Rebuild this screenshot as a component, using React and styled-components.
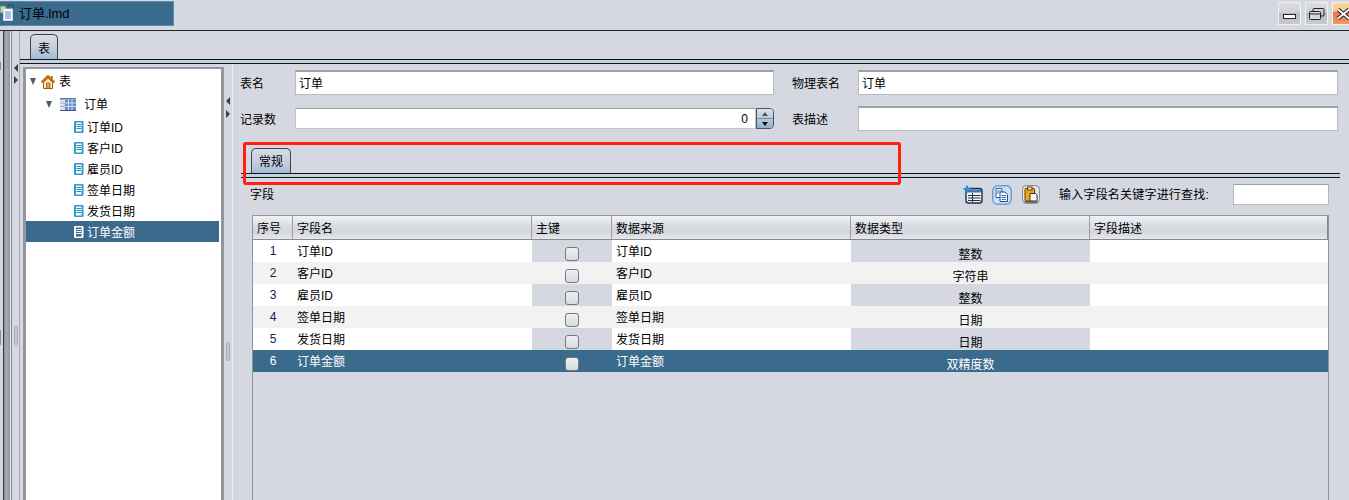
import React from "react";
import styled, { createGlobalStyle } from "styled-components";

const bg = "#d5d8e1";
const blue = "#3a6a8c";

const GlobalStyle = createGlobalStyle`
  html, body { margin: 0; padding: 0; background: ${bg}; }
  * { box-sizing: border-box; }
  body { font: 12px "Liberation Sans", "Noto Sans CJK SC", sans-serif; color: #000; }
`;

const Page = styled.div`
  position: relative;
  width: 1349px;
  height: 500px;
  overflow: hidden;
  background: ${bg};
  display: flex;
  flex-direction: column;
`;

const TitleBar = styled.div`
  height: 31px;
  flex: none;
  border-bottom: 1px solid #22262c;
  display: flex;
  justify-content: space-between;
  padding-top: 1px;
`;
const FileTab = styled.div`
  width: 174px;
  height: 25px;
  background: ${blue};
  border: 1px solid #5b8aae;
  border-left: none;
  display: flex;
  align-items: center;
  gap: 5px;
  font-size: 13px;
  padding-bottom: 2px;
`;
const WinButtons = styled.div`
  display: flex;
  gap: 4px;
  padding-top: 1px;
  margin-right: -6px;
`;
const WinButton = styled.div`
  width: 23px;
  height: 23px;
  border: 1px solid #f0f1f4;
  display: flex;
  align-items: center;
  justify-content: center;
  background: ${(p) =>
    p.$close
      ? "linear-gradient(#f8d9a0 0, #f6c689 40%, #f0704a 45%, #f29a5c 100%)"
      : "linear-gradient(#dcdde2 0, #cfd1d6 45%, #b9bbc0 50%, #c8cacf 100%)"};
`;

const Body = styled.div`
  flex: 1;
  display: flex;
  min-height: 0;
`;
const EdgeGutter = styled.div`
  width: 3px;
  flex: none;
  display: flex;
  flex-direction: column;
`;
const GutterMark = styled.div`
  width: 1px;
  height: ${(p) => p.$h}px;
  margin-top: ${(p) => p.$top}px;
  background: #8d9098;
`;
const EdgeStrip = styled.div`
  width: 9px;
  flex: none;
  border-left: 1px solid #33373d;
  border-right: 1px solid #888b92;
  background: linear-gradient(90deg, #8f929b 0, #a6a9b2 35%, #9396a0 84%, #e6e8ee 85%, #e6e8ee 100%);
`;
const Splitter = styled.div`
  width: 8px;
  flex: none;
  display: flex;
  flex-direction: column;
  align-items: center;
  padding-top: ${(p) => p.$top}px;
  border-right: 1px solid ${(p) => p.$line};
`;
const ArrowLeft = styled.div`
  width: 0;
  height: 0;
  border-style: solid;
  border-width: 4px 4px 4px 0;
  border-color: transparent #3c3f44 transparent transparent;
`;
const ArrowRight = styled.div`
  width: 0;
  height: 0;
  margin-top: ${(p) => p.$gap}px;
  border-style: solid;
  border-width: 4px 0 4px 4px;
  border-color: transparent transparent transparent #3c3f44;
`;
const Grip = styled.div`
  width: 4px;
  height: 19px;
  margin-top: ${(p) => p.$top}px;
  border: 1px solid #a9acb3;
  border-radius: 2px;
  background: #c6c9d0;
`;

const Workspace = styled.div`
  flex: 1;
  min-width: 0;
  display: flex;
  flex-direction: column;
`;
const TabStrip = styled.div`
  display: flex;
  height: ${(p) => p.$h}px;
  flex: none;
  padding-left: ${(p) => p.$left}px;
  align-items: flex-end;
`;
const Tab = styled.div`
  width: ${(p) => p.$w}px;
  height: 25px;
  border: 1px solid #3d4650;
  border-bottom: none;
  border-radius: 5px 5px 0 0;
  background: linear-gradient(#d8dbe3 0, #c6d0dd 50%, #a3bdd4 100%);
  display: flex;
  align-items: center;
  justify-content: center;
  padding-bottom: ${(p) => p.$lift || 0}px;
`;
const TabLine = styled.div`
  height: 5px;
  flex: none;
  border-top: 1px solid #10151c;
  border-bottom: 1px solid #10151c;
  background: #c4d2e0;
  margin-right: ${(p) => p.$right || 0}px;
`;

const Panes = styled.div`
  flex: 1;
  display: flex;
  min-height: 0;
`;
const TreePane = styled.div`
  width: 201px;
  flex: none;
  margin: 3px 0 0 3px;
  background: #fff;
  border: 3px solid #93969c;
  border-top-width: 2px;
  border-bottom: none;
  padding-top: 1px;
`;
const TreeRow = styled.div`
  display: flex;
  align-items: center;
  height: ${(p) => p.$h || 21}px;
  padding-left: ${(p) => p.$indent}px;
  margin-right: 2px;
  color: ${(p) => (p.$selected ? "#fff" : "#000")};
  background: ${(p) => (p.$selected ? blue : "transparent")};
`;
const TreeToggle = styled.div`
  width: 0;
  height: 0;
  margin-right: ${(p) => p.$gap}px;
  border-style: solid;
  border-width: 7px 3.5px 0 3.5px;
  border-color: #55585c transparent transparent transparent;
`;
const TreeLabel = styled.span`
  margin-left: ${(p) => p.$gap}px;
  padding-bottom: ${(p) => p.$lift || 0}px;
`;

const DetailPane = styled.div`
  flex: 1;
  min-width: 0;
  display: flex;
  flex-direction: column;
  border-left: 1px solid #f0f1f5;
  padding: 6px 0 0 7px;
`;
const FormGrid = styled.div`
  display: grid;
  grid-template-columns: 55px 479px 18px 66px 480px;
  grid-template-rows: 25px 25px;
  row-gap: 11px;
  align-items: center;
`;
const FormLabel = styled.div`
  grid-column: ${(p) => p.$col};
`;
const Field = styled.div`
  height: 25px;
  padding: 0 0 2px 3px;
  display: flex;
  align-items: center;
  background: #fff;
  border: 1px solid #b9bbbf;
  border-top: 2px solid #a0a2a6;
`;
const NumberField = styled.div`
  display: flex;
  height: 21px;
`;
const NumberValue = styled.div`
  flex: 1;
  background: #fff;
  border: 1px solid #c2c4c8;
  border-top: 1px solid #a0a2a6;
  text-align: right;
  padding: 3px 7px 0 0;
`;
const Spinner = styled.div`
  width: 18px;
  display: flex;
  flex-direction: column;
  border: 1px solid #43576b;
  border-radius: 0 4px 4px 0;
  overflow: hidden;
`;
const SpinPart = styled.div`
  flex: 1;
  display: flex;
  align-items: center;
  justify-content: center;
  background: ${(p) => (p.$down ? "linear-gradient(#b9cbdb, #93afc8)" : "linear-gradient(#e0e2e8, #bcc8d5)")};
  border-top: ${(p) => (p.$down ? "1px solid #7d8c9b" : "none")};
`;
const SpinUp = styled.div`
  width: 0;
  height: 0;
  border-style: solid;
  border-width: 0 3.5px 4px 3.5px;
  border-color: transparent transparent #555 transparent;
`;
const SpinDown = styled.div`
  width: 0;
  height: 0;
  border-style: solid;
  border-width: 4px 3.5px 0 3.5px;
  border-color: #111 transparent transparent transparent;
`;

const InnerTabs = styled.div`
  margin-left: 1px;
`;
const ToolRow = styled.div`
  height: 21px;
  margin-top: 6px;
  flex: none;
  display: flex;
  align-items: center;
  padding: 0 20px 0 10px;
`;
const ToolTitle = styled.div`
  flex: 1;
  padding-bottom: 3px;
`;
const ToolIcons = styled.div`
  display: flex;
  gap: 9px;
  margin-right: 18px;
`;
const ToolIcon = styled.div`
  width: 20px;
  height: 20px;
  display: flex;
  align-items: center;
  justify-content: center;
`;
const SearchLabel = styled.div`
  margin-right: 24px;
  padding-bottom: 3px;
  letter-spacing: 0.2px;
`;
const SearchField = styled.div`
  width: 96px;
  height: 21px;
  background: #fff;
  border: 1px solid #b4b6ba;
  border-top: 1px solid #a0a2a6;
`;

const Table = styled.div`
  flex: 1;
  margin: 10px 20px 0 12px;
  border: 1px solid #93969c;
  border-bottom: none;
  display: flex;
  flex-direction: column;
  min-height: 0;
`;
const columns = "40px 239px 80px 239px 239px 1fr";
const HeaderRow = styled.div`
  display: grid;
  grid-template-columns: ${columns};
  height: 24px;
  flex: none;
  border-bottom: 1px solid #85888e;
  background: linear-gradient(#f3f3f6 0, #dcdee4 40%, #d3d6dd 70%, #e7e8ec 100%);
`;
const HeaderCell = styled.div`
  display: flex;
  align-items: center;
  padding-left: 4px;
  border-right: 1px solid #9a9da3;
  &:last-child { border-right: 1px solid #85888e; }
`;
const Row = styled.div`
  display: grid;
  grid-template-columns: ${columns};
  grid-template-rows: 22px;
  height: 22px;
  flex: none;
  overflow: hidden;
  color: ${(p) => (p.$selected ? "#fff" : "#000")};
  background: ${(p) => (p.$selected ? blue : p.$even ? "#f2f2f2" : "#fff")};
`;
const Cell = styled.div`
  display: flex;
  align-items: center;
  padding-left: 4px;
  padding-bottom: 2px;
`;
const NumCell = styled(Cell)`
  justify-content: center;
  padding-left: 0;
  padding-bottom: 1px;
  color: ${(p) => (p.$selected ? "#fff" : "#1a1a50")};
`;
const CheckCell = styled.div`
  display: flex;
  justify-content: center;
  padding-top: 7px;
  background: ${(p) => (p.$selected ? blue : p.$even ? "#f2f2f2" : bg)};
`;
const Checkbox = styled.div`
  width: 14px;
  height: 14px;
  border: 1px solid #74777d;
  border-radius: 3px;
  background: linear-gradient(#f0f0f2, #d8dadf);
`;
const TypeCell = styled.div`
  display: flex;
  justify-content: center;
  padding-top: 5px;
  background: ${(p) => (p.$selected ? blue : p.$even ? "#f2f2f2" : bg)};
`;

const Callout = styled.div`
  position: absolute;
  left: 243px;
  top: 142px;
  width: 658px;
  height: 43px;
  border: 3px solid #ff2010;
  border-radius: 3px;
  pointer-events: none;
`;

const MinimizeMark = styled.div`
  margin-top: 5px;
  display: flex;
`;

const HouseIcon = () => (
  <svg width="14" height="14" viewBox="0 0 14 14">
    <path d="M0.5 7.5 7 1l6.5 6.5" fill="none" stroke="#c26a12" strokeWidth="2" />
    <path d="M2.5 7.5 7 3l4.5 4.5v6h-9z" fill="#fdeecb" stroke="#a5590f" />
    <rect x="5.5" y="8" width="3.5" height="5.5" fill="#ee9a1c" stroke="#8a4a12" strokeWidth="0.6" />
    <rect x="10" y="1" width="1.8" height="3" fill="#c26a12" />
  </svg>
);

const TableIcon = () => (
  <svg width="16" height="13" viewBox="0 0 16 13">
    <rect x="0" y="0" width="16" height="13" fill="#dfe3ec" />
    <rect x="0" y="0" width="16" height="1.5" fill="#5f77a8" />
    <rect x="0" y="12" width="16" height="1" fill="#3f5688" />
    <rect x="5" y="2" width="11" height="10" fill="#6a8bd0" />
    <path d="M8.5 2v10M12 2v10M5 5h11M5 8.5h11" stroke="#dce5f6" strokeWidth="0.9" />
    <path d="M0 5h5M0 8.5h5" stroke="#9aa3b6" strokeWidth="0.9" />
  </svg>
);

const FieldIcon = ({ $selected }) => (
  <svg width="10" height="12" viewBox="0 0 10 12">
    <rect x="0" y="0" width="9.5" height="12" rx="1" fill={$selected ? "#fff" : "#2a9cd0"} />
    <rect x="2" y="1.5" width="5.5" height="9" fill={$selected ? blue : "#fff"} />
    <path d="M2.5 3.5h4.5M2.5 5.5h4.5M2.5 7.5h4.5" stroke={$selected ? "#fff" : "#2a86b4"} />
  </svg>
);

const FileIcon = () => (
  <svg width="14" height="17" viewBox="0 0 14 17">
    <rect x="0" y="2" width="6" height="7" fill="#bcd9a8" stroke="#5f8a66" />
    <rect x="8" y="1" width="5" height="4" fill="none" stroke="#2a4a68" />
    <rect x="3.5" y="5" width="9" height="11.5" fill="#fff" stroke="#c5d6e6" />
    <path d="M5 8h6M5 10h6M5 12h6M5 14h6" stroke="#4a86c0" />
  </svg>
);

const AddColumnIcon = () => (
  <svg width="20" height="19" viewBox="0 0 20 19">
    <rect x="3" y="3.5" width="16" height="14.5" rx="2.5" fill="#eef1f6" stroke="#1e2c3c" strokeWidth="1.4" />
    <rect x="4" y="4.5" width="14" height="3" fill="#3f74ac" />
    <path d="M9.5 8v9M5 10.5h12.5M5 13h12.5M5 15.5h12.5" stroke="#22344a" strokeWidth="1" />
    <path d="M4 0.5v7M0.5 4h7" stroke="#2a8fd8" strokeWidth="2.2" />
  </svg>
);

const CopyIcon = () => (
  <svg width="20" height="20" viewBox="0 0 20 20">
    <rect x="0.75" y="0.75" width="18.5" height="18.5" rx="5" fill="#cfe0f4" stroke="#6a9fd2" strokeWidth="1.5" />
    <path d="M4 3.5h6v9H4z" fill="#fff" stroke="#2a5f9e" />
    <path d="M8 7h5l2.5 2.5v7H8z" fill="#fff" stroke="#1e4f90" />
    <path d="M5 6h4M5 8h2M9.5 10.5h4.5M9.5 12.5h4.5M9.5 14.5h4.5" stroke="#2a72c0" />
  </svg>
);

const PasteIcon = () => (
  <svg width="18" height="19" viewBox="0 0 18 19">
    <rect x="0.5" y="0.5" width="17" height="18" rx="4" fill="#dfe1e7" stroke="#8a8d95" />
    <rect x="3" y="3.5" width="9.5" height="12.5" rx="1" fill="#e9a816" stroke="#5f4608" />
    <rect x="5.5" y="2" width="4.5" height="3" fill="#f6e6a0" stroke="#5f4608" />
    <path d="M8 8.5h5.5L15 10v6H8z" fill="#fff" stroke="#333" />
    <path d="M2.5 17h13" stroke="#3a3a3a" strokeWidth="1.2" />
  </svg>
);

const MinimizeIcon = () => (
  <svg width="14" height="5" viewBox="0 0 14 5">
    <rect x="0.5" y="0.5" width="12" height="4" fill="#fff" stroke="#222" />
  </svg>
);

const RestoreIcon = () => (
  <svg width="16" height="12" viewBox="0 0 16 12">
    <rect x="4" y="0.5" width="11" height="7.5" rx="1" fill="none" stroke="#222" />
    <rect x="0.5" y="3.5" width="11" height="8" rx="1" fill="#d4d6da" stroke="#222" />
    <path d="M1 6h10" stroke="#222" />
  </svg>
);

const CloseIcon = () => (
  <svg width="15" height="12" viewBox="0 0 15 12">
    <path d="M2 1.5l11 9M13 1.5 2 10.5" stroke="#222" strokeWidth="4" />
    <path d="M2 1.5l11 9M13 1.5 2 10.5" stroke="#fff" strokeWidth="2" />
  </svg>
);

const fields = [
  { name: "订单ID", type: "整数" },
  { name: "客户ID", type: "字符串" },
  { name: "雇员ID", type: "整数" },
  { name: "签单日期", type: "日期" },
  { name: "发货日期", type: "日期" },
  { name: "订单金额", type: "双精度数" },
];
const headers = ["序号", "字段名", "主键", "数据来源", "数据类型", "字段描述"];

export default function App() {
  return (
    <Page>
      <GlobalStyle />
      <TitleBar>
        <FileTab>
          <FileIcon />
          <span>订单.lmd</span>
        </FileTab>
        <WinButtons>
          <WinButton>
            <MinimizeMark><MinimizeIcon /></MinimizeMark>
          </WinButton>
          <WinButton><RestoreIcon /></WinButton>
          <WinButton $close><CloseIcon /></WinButton>
        </WinButtons>
      </TitleBar>
      <Body>
        <EdgeGutter>
          <GutterMark $top={31} $h={8} />
          <GutterMark $top={260} $h={15} />
        </EdgeGutter>
        <EdgeStrip />
        <Splitter $top={33} $line="#a8abb2">
          <ArrowLeft />
          <ArrowRight $gap={4} />
          <Grip $top={242} />
        </Splitter>
        <Workspace>
          <TabStrip $h={28} $left={10}>
            <Tab $w={28}>表</Tab>
          </TabStrip>
          <TabLine />
          <Panes>
            <TreePane>
              <TreeRow $indent={4} $h={23}>
                <TreeToggle $gap={5} />
                <HouseIcon />
                <TreeLabel $gap={4} $lift={2}>表</TreeLabel>
              </TreeRow>
              <TreeRow $indent={20} $h={23}>
                <TreeToggle $gap={8} />
                <TableIcon />
                <TreeLabel $gap={8} $lift={2}>订单</TreeLabel>
              </TreeRow>
              {fields.map((f, i) => (
                <TreeRow key={f.name} $indent={48} $selected={i === 5}>
                  <FieldIcon $selected={i === 5} />
                  <TreeLabel $gap={3}>{f.name}</TreeLabel>
                </TreeRow>
              ))}
            </TreePane>
            <Splitter $top={33} $line="transparent">
              <ArrowLeft />
              <ArrowRight $gap={5} />
              <Grip $top={224} />
            </Splitter>
            <DetailPane>
              <FormGrid>
                <FormLabel $col={1}>表名</FormLabel>
                <Field>订单</Field>
                <FormLabel $col={4}>物理表名</FormLabel>
                <Field>订单</Field>
                <FormLabel $col={1}>记录数</FormLabel>
                <NumberField>
                  <NumberValue>0</NumberValue>
                  <Spinner>
                    <SpinPart><SpinUp /></SpinPart>
                    <SpinPart $down><SpinDown /></SpinPart>
                  </Spinner>
                </NumberField>
                <FormLabel $col={4}>表描述</FormLabel>
                <Field />
              </FormGrid>
              <InnerTabs>
                <TabStrip $h={42} $left={10}>
                  <Tab $w={40} $lift={2}>常规</Tab>
                </TabStrip>
                <TabLine $right={9} />
              </InnerTabs>
              <ToolRow>
                <ToolTitle>字段</ToolTitle>
                <ToolIcons>
                  <ToolIcon><AddColumnIcon /></ToolIcon>
                  <ToolIcon><CopyIcon /></ToolIcon>
                  <ToolIcon><PasteIcon /></ToolIcon>
                </ToolIcons>
                <SearchLabel>输入字段名关键字进行查找:</SearchLabel>
                <SearchField />
              </ToolRow>
              <Table>
                <HeaderRow>
                  {headers.map((h) => (
                    <HeaderCell key={h}>{h}</HeaderCell>
                  ))}
                </HeaderRow>
                {fields.map((f, i) => {
                  const selected = i === 5;
                  const even = i % 2 === 1;
                  return (
                    <Row key={f.name} $selected={selected} $even={even}>
                      <NumCell $selected={selected}>{i + 1}</NumCell>
                      <Cell>{f.name}</Cell>
                      <CheckCell $selected={selected} $even={even}>
                        <Checkbox />
                      </CheckCell>
                      <Cell>{f.name}</Cell>
                      <TypeCell $selected={selected} $even={even}>
                        {f.type}
                      </TypeCell>
                      <Cell />
                    </Row>
                  );
                })}
              </Table>
            </DetailPane>
          </Panes>
        </Workspace>
      </Body>
      <Callout />
    </Page>
  );
}
